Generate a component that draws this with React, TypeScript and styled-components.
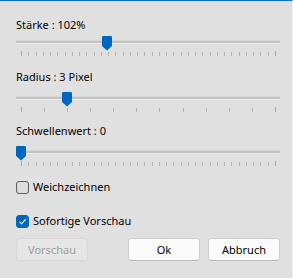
import React from "react";
import styled, { createGlobalStyle } from "styled-components";

const Global = createGlobalStyle`
  html, body { margin: 0; padding: 0; background: #e0e0e0; }
  body { font-family: "Noto Sans", "Open Sans", sans-serif; font-size: 11px; color: #000; }
`;

const Dialog = styled.div`
  width: 293px;
  height: 278px;
  box-sizing: border-box;
  background: #e0e0e0;
  border-top: 1px solid #0a6fc9;
  border-right: 1px solid #f0f0f0;
  padding: 16px 12px 0 16px;
  display: flex;
  flex-direction: column;
`;

const Block = styled.div<{ $mt: number }>`
  margin-top: ${(p) => p.$mt}px;
  display: flex;
  flex-direction: column;
`;

const Label = styled.div<{ $gap: number }>`
  height: 16px;
  line-height: 16px;
  margin-bottom: ${(p) => p.$gap}px;
  white-space: nowrap;
`;

const SliderArea = styled.div`
  position: relative;
  width: 264px;
  height: 14px;
`;

const Track = styled.div`
  margin-top: 5px;
  height: 2px;
  background: #c3c3c3;
  box-shadow: 0 1px 0 #ebebeb, 0 -1px 0 #d6d6d6;
`;

const Thumb = styled.svg`
  position: absolute;
  top: 0;
  width: 10px;
  height: 15px;
`;

const Ticks = styled.div`
  margin-top: 1px;
  height: 5px;
  padding: 0 4px 0 5px;
  display: flex;
  justify-content: space-between;
  align-items: flex-start;
`;

const Tick = styled.span<{ $end: boolean }>`
  width: 1px;
  height: ${(p) => (p.$end ? 5 : 4)}px;
  margin-top: ${(p) => (p.$end ? 0 : 1)}px;
  background: ${(p) => (p.$end ? "#a6a6a6" : "#b4b4b4")};
`;

type SliderProps = {
  label: string;
  ticks: number;
  frac: number;
  mt: number;
  gap: number;
};

const Slider = ({ label, ticks, frac, mt, gap }: SliderProps) => {
  const left = frac * (264 - 10);
  return (
    <Block $mt={mt}>
      <Label $gap={gap}>{label}</Label>
      <SliderArea>
        <Track />
        <Thumb viewBox="0 0 10 15" style={{ left }}>
          <path d="M1.2 0 H8.8 A1.2 1.2 0 0 1 10 1.2 V10 L5 14.6 L0 10 V1.2 A1.2 1.2 0 0 1 1.2 0 Z" fill="#0067c0" />
        </Thumb>
      </SliderArea>
      <Ticks>
        {Array.from({ length: ticks }).map((_, i) => (
          <Tick key={i} $end={i === 0 || i === ticks - 1} />
        ))}
      </Ticks>
    </Block>
  );
};

const CheckRow = styled.label<{ $mt: number }>`
  margin-top: ${(p) => p.$mt}px;
  display: flex;
  align-items: center;
  gap: 4px;
  height: 16px;
  line-height: 16px;
`;

const Box = styled.span<{ $checked: boolean }>`
  width: 13px;
  height: 13px;
  box-sizing: border-box;
  border-radius: 3px;
  border: 1px solid ${(p) => (p.$checked ? "#0067c0" : "#5c5c5c")};
  background: ${(p) => (p.$checked ? "#0067c0" : "#dcdcdc")};
  display: flex;
  align-items: center;
  justify-content: center;
`;

const Buttons = styled.div`
  margin-top: 9px;
  width: 264px;
  display: flex;
  gap: 8px;
`;

const Button = styled.button<{ $disabled?: boolean }>`
  width: 72px;
  height: 23px;
  box-sizing: border-box;
  border-radius: 4px;
  font-family: inherit;
  font-size: 11px;
  padding: 0;
  border: 1px solid ${(p) => (p.$disabled ? "#d8d8d8" : "#cdcdcd")};
  border-bottom-color: ${(p) => (p.$disabled ? "#d8d8d8" : "#b8b8b8")};
  background: ${(p) => (p.$disabled ? "#e6e6e6" : "#fbfbfb")};
  color: ${(p) => (p.$disabled ? "#9d9d9d" : "#000")};
  &:first-child { margin-right: auto; }
`;

export default function App() {
  return (
    <>
      <Global />
      <Dialog>
        <Slider label="Stärke : 102%" ticks={36} frac={0.337} mt={0} gap={3} />
        <Slider label="Radius : 3 Pixel" ticks={12} frac={2 / 11} mt={13} gap={7} />
        <Slider label="Schwellenwert : 0" ticks={36} frac={0} mt={11} gap={7} />
        <CheckRow $mt={13}>
          <Box $checked={false} />
          Weichzeichnen
        </CheckRow>
        <CheckRow $mt={18}>
          <Box $checked={true}>
            <svg width="9" height="9" viewBox="0 0 9 9">
              <path d="M1.5 4.8 L3.6 6.8 L7.6 2.4" fill="none" stroke="#fff" strokeWidth="1.1" />
            </svg>
          </Box>
          Sofortige Vorschau
        </CheckRow>
        <Buttons>
          <Button $disabled>Vorschau</Button>
          <Button>Ok</Button>
          <Button>Abbruch</Button>
        </Buttons>
      </Dialog>
    </>
  );
}
